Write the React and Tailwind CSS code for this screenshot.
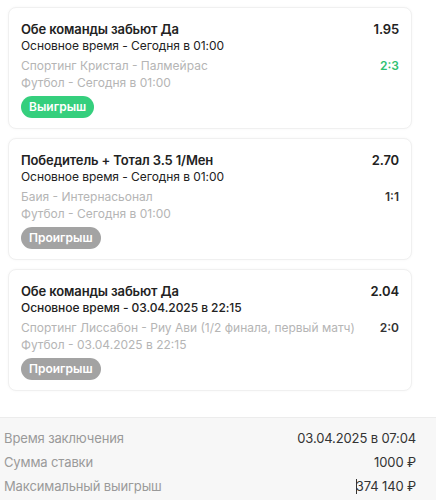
import React from 'react';

const bets = [
  {
    title: 'Обе команды забьют Да',
    odds: '1.95',
    period: 'Основное время - Сегодня в 01:00',
    match: 'Спортинг Кристал - Палмейрас',
    score: '2:3',
    info: 'Футбол - Сегодня в 01:00',
    won: true,
  },
  {
    title: 'Победитель + Тотал 3.5 1/Мен',
    odds: '2.70',
    period: 'Основное время - Сегодня в 01:00',
    match: 'Баия - Интернасьонал',
    score: '1:1',
    info: 'Футбол - Сегодня в 01:00',
    won: false,
  },
  {
    title: 'Обе команды забьют Да',
    odds: '2.04',
    period: 'Основное время - 03.04.2025 в 22:15',
    match: 'Спортинг Лиссабон - Риу Ави (1/2 финала, первый матч)',
    score: '2:0',
    info: 'Футбол - 03.04.2025 в 22:15',
    won: false,
    boldPeriod: true,
  },
];

function BetCard({ bet }) {
  return (
    <div className="h-[122px] rounded-lg border border-[#f0f0f0] bg-white px-3 pt-3 shadow-[0_0_3px_rgba(0,0,0,0.04)]">
      <div className="flex items-center justify-between text-[13px] leading-[18px] font-semibold tracking-[-0.01em] text-[#222]">
        <span>{bet.title}</span>
        <span>{bet.odds}</span>
      </div>
      <div className={`text-[12px] leading-[16px] tracking-[-0.005em] text-[#222] ${bet.boldPeriod ? 'font-medium' : ''}`}>
        {bet.period}
      </div>
      <div className="mt-[3px] flex items-center justify-between text-[12px] leading-[17px]">
        <span className="whitespace-nowrap text-[#b5b5b5]">{bet.match}</span>
        <span className={bet.won ? 'font-semibold text-[#2fc171]' : 'font-semibold text-[#333]'}>{bet.score}</span>
      </div>
      <div className="text-[12px] leading-[17px] text-[#b5b5b5]">{bet.info}</div>
      <div className="mt-[5px] flex">
        <span
          className={`rounded-full px-2 text-[12px] leading-[22px] font-semibold text-white ${bet.won ? 'bg-[#35cf7d]' : 'bg-[#a3a3a3]'}`}
        >
          {bet.won ? 'Выигрыш' : 'Проигрыш'}
        </span>
      </div>
    </div>
  );
}

export default function App() {
  return (
    <div className="h-[500px] w-[436px] overflow-hidden bg-white" style={{ fontFamily: 'Inter, "Noto Sans", sans-serif' }}>
      <div className="flex flex-col gap-[9px] pt-[7px] pl-[8px] pr-[24px]">
        {bets.map((bet, i) => (
          <BetCard key={i} bet={bet} />
        ))}
      </div>
      <div className="mt-[26px] border-t border-[#ececec] bg-[#f7f7f7] pt-[8px] pb-4 pl-[4px] pr-[20px] text-[13px] leading-[24px] tracking-[-0.01em]">
        <div className="flex justify-between">
          <span className="text-[#9a9a9a]">Время заключения</span>
          <span className="text-[#333]">03.04.2025 в 07:04</span>
        </div>
        <div className="flex justify-between">
          <span className="text-[#9a9a9a]">Сумма ставки</span>
          <span className="text-[#333]">1000 ₽</span>
        </div>
        <div className="flex justify-between">
          <span className="text-[#9a9a9a]">Максимальный выигрыш</span>
          <span className="flex items-center text-[#333]">
            <span className="mr-[-1px] inline-block h-[15px] w-[1px] bg-[#333]" />
            374 140 ₽
          </span>
        </div>
      </div>
    </div>
  );
}
